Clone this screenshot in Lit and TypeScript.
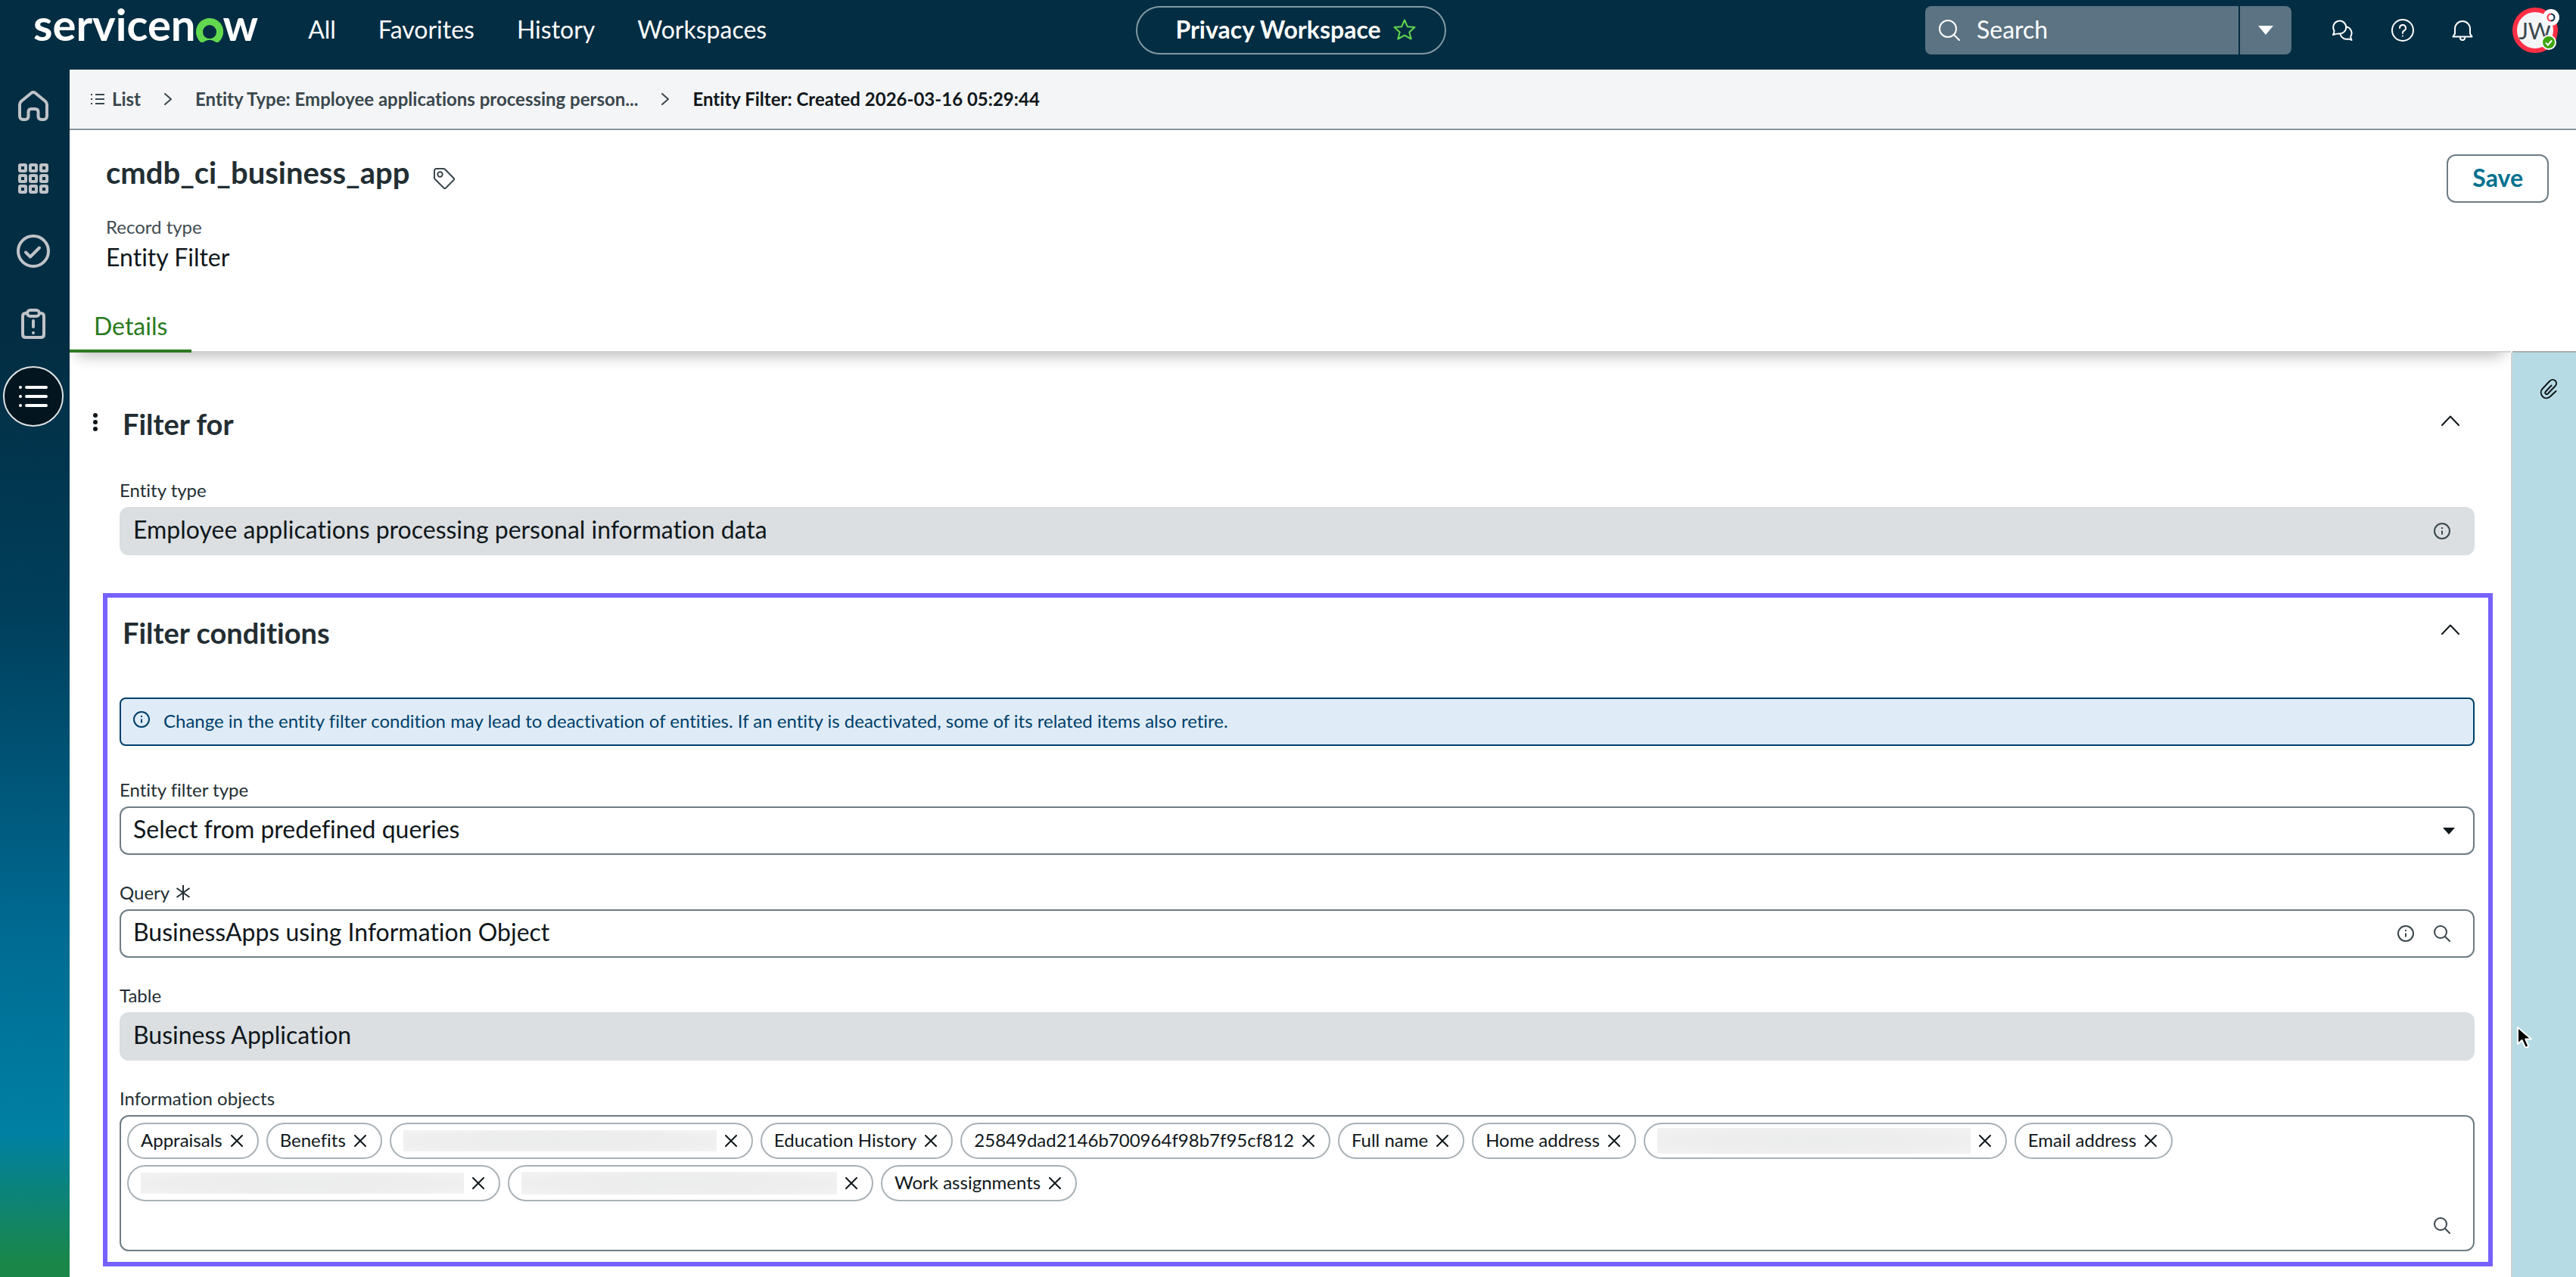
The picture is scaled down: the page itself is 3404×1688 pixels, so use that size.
import { LitElement, html, css, svg, nothing, type TemplateResult } from "lit";
import { customElement } from "lit/decorators.js";

type Tag = { label: string; width?: number; height?: number };

const NAV = ["All", "Favorites", "History", "Workspaces"];

/* Tags with a width have their label masked by a grey block. */
const TAGS: Tag[] = [
  { label: "Appraisals" },
  { label: "Benefits" },
  { label: "", width: 414, height: 28 },
  { label: "Education History" },
  { label: "25849dad2146b700964f98b7f95cf812" },
  { label: "Full name" },
  { label: "Home address" },
  { label: "", width: 414, height: 34 },
  { label: "Email address" },
  { label: "", width: 427, height: 28 },
  { label: "", width: 417, height: 30 },
  { label: "Work assignments" },
];

const icon = (w: number, h: number, body: TemplateResult | unknown, cls = "") =>
  html`<svg class=${cls} width=${w} height=${h} viewBox="0 0 ${w} ${h}" fill="none" stroke="currentColor" stroke-width="2" stroke-linecap="round" stroke-linejoin="round" aria-hidden="true">${body}</svg>`;

const infoIcon = () =>
  icon(22, 22, svg`<circle cx="11" cy="11" r="10"/><path d="M11 10.500v5" stroke-linecap="butt"/><path d="M11 6v2" stroke-linecap="butt"/>`);
const searchIcon = () => icon(22, 22, svg`<circle cx="9" cy="9" r="8"/><path d="M15 15l6 6"/>`);
const chevronUp = () => icon(24, 14, svg`<path d="M1 13L12 1.500L23 13"/>`);
const chevronRight = () => icon(10, 16, svg`<path d="M1 1l8 7-8 7"/>`);
const closeIcon = () => icon(16, 16, svg`<path d="M1 1l14 14M15 1L1 15"/>`);

const SIDE = [
  {
    name: "Home",
    body: icon(40, 40, svg`<path stroke-width="4" d="M2 18.500c0-2 .8-3.500 2.200-4.800L17 3.200c1.800-1.500 4.200-1.500 6 0l12.800 10.500c1.400 1.300 2.200 2.800 2.200 4.800V33c0 3-1.700 5-4.500 5h-2.700c-2.800 0-4.300-1.700-4.300-4.500V28c0-2.500-1.500-4-4-4h-5c-2.500 0-4 1.500-4 4v5.500c0 2.800-1.500 4.500-4.300 4.500H6.500C3.700 38 2 36 2 33z"/>`),
  },
  {
    name: "Apps",
    body: icon(40, 40, [0, 14, 28].map((y) => [0, 14, 28].map((x) => svg`<rect x=${x + 2} y=${y + 2} width="8" height="8" rx="1" stroke-width="4"/>`))),
  },
  {
    name: "Tasks",
    body: icon(44, 44, svg`<circle cx="22" cy="22" r="20" stroke-width="4"/><path stroke-width="4" d="M12 23.500l6 6 12-12"/>`),
  },
  {
    name: "Issues",
    body: icon(32, 40, svg`<path stroke-width="4" d="M8 6H6C3.500 6 2 7.500 2 10v24c0 2.500 1.500 4 4 4h20c2.500 0 4-1.500 4-4V10c0-2.500-1.500-4-4-4h-2"/><rect x="8" y="2" width="16" height="8" rx="4" stroke-width="4"/><path stroke-width="4" d="M16 16v8"/><path stroke-width="4" d="M16 32v.1"/>`),
  },
  {
    name: "Lists",
    active: true,
    body: icon(38, 30, svg`<path stroke-width="4" d="M2 3v.1M2 15v.1M2 27v.1M10 3h26M10 15h26M10 27h26"/>`),
  },
];

@customElement("app-root")
export class AppRoot extends LitElement {
  static styles = css`
    :host {
      display: flex;
      flex-direction: column;
      min-height: 100vh;
      font-family: Lato, "Liberation Sans", sans-serif;
      font-size: 32px;
      line-height: 40px;
      font-variant-ligatures: none;
      color: #10171b;
      background: #fff;
    }
    *, *::before, *::after { box-sizing: border-box; }
    svg { display: block; flex: none; }
    button, input, select { font: inherit; font-variant-ligatures: none; color: inherit; margin: 0; }
    button { background: none; border: 0; padding: 0; cursor: pointer; }
    a { color: inherit; text-decoration: none; }
    h1, h2, p { margin: 0; }

    .top {
      display: grid;
      grid-template-columns: 1fr auto 1fr;
      align-items: center;
      height: 92px;
      padding: 0 24px 12px 32px;
      background: #032d42;
      color: #fff;
    }
    .left { display: flex; align-items: center; gap: 66px; padding-left: 12px; }
    .logo {
      display: flex;
      align-items: center;
      font-size: 58px;
      line-height: 48px;
      font-weight: 700;
    }
    .logo span { padding-bottom: 16px; }
    .nav { display: flex; gap: 56px; padding-bottom: 2px; }
    .pill {
      display: flex;
      align-items: center;
      gap: 16px;
      height: 64px;
      padding: 0 38px 2px 50px;
      border: 2px solid #8299a5;
      border-radius: 32px;
      font-weight: 700;
    }
    .pill svg { color: #62d84e; }
    .right { display: flex; align-items: center; justify-content: flex-end; }
    .search { display: flex; gap: 2px; height: 64px; margin-right: 52px; }
    .search-box {
      display: flex;
      align-items: center;
      gap: 22px;
      width: 414px;
      padding-left: 18px;
      background: #5b7382;
      border-radius: 8px 0 0 8px;
    }
    .search-box input {
      flex: 1;
      min-width: 0;
      height: 64px;
      padding: 0 0 4px;
      border: 0;
      outline: 0;
      background: none;
    }
    .search-box input::placeholder { color: #fff; opacity: 1; }
    .search-more {
      display: flex;
      align-items: center;
      justify-content: center;
      width: 68px;
      background: #5b7382;
      border-radius: 0 8px 8px 0;
    }
    .tools { display: flex; align-items: center; gap: 50px; }
    .avatar {
      position: relative;
      display: flex;
      align-items: center;
      justify-content: center;
      width: 60px;
      height: 60px;
      margin-left: 2px;
      border: 6px solid #ff2f46;
      border-radius: 50%;
      background: #f4f5f7;
      color: #3a474d;
      font-size: 30px;
    }
    .presence { position: absolute; right: -4px; bottom: -2px; }
    .ping { position: absolute; right: -8px; top: -4px; }

    .body { display: flex; flex: 1; }
    .side {
      display: flex;
      flex-direction: column;
      gap: 16px;
      width: 92px;
      padding: 8px 8px 8px 4px;
      background: linear-gradient(#032d42 0%, #032d42 22%, #003f5c 45%, #006b93 72%, #0080a3 88%, #1a8748 99%);
      color: #bfc3c8;
    }
    .side button {
      display: flex;
      align-items: center;
      justify-content: center;
      height: 80px;
      border-radius: 50%;
    }
    .side .active { border: 2px solid #dfe3e6; background: #03161f; color: #fff; }

    .page { display: flex; flex-direction: column; flex: 1; min-width: 0; }
    .crumbs {
      display: flex;
      align-items: center;
      height: 80px;
      padding: 0 28px;
      gap: 31px;
      border-bottom: 2px solid #86939a;
      background: #f4f5f7;
      color: #3a474d;
      font-size: 24px;
      font-weight: 700;
      line-height: 32px;
    }
    .crumbs a { display: flex; align-items: center; gap: 10px; }
    .crumbs .current { color: #10171b; }

    .record {
      display: flex;
      justify-content: space-between;
      align-items: flex-start;
      padding: 32px 36px 42px 48px;
    }
    .title { display: flex; align-items: center; gap: 32px; }
    h1, h2 { font-size: 40px; line-height: 48px; font-weight: 700; color: #232e33; }
    h2 { font-size: 38px; }
    .title svg { margin-top: 16px; color: #3a474d; }
    .kind { margin-top: 32px; font-size: 24px; line-height: 32px; color: #3f4c52; }
    .kind-value { margin-top: 4px; }
    .save {
      height: 64px;
      padding: 0 32px 2px;
      border: 2px solid #6e7c84;
      border-radius: 12px;
      color: #00718f;
      font-weight: 700;
    }

    .tabs { display: flex; position: relative; }
    .tab-list {
      flex: 1;
      border-bottom: 2px solid #ced3d6;
      box-shadow: 0 14px 20px -10px rgba(0, 0, 0, 0.28);
      clip-path: inset(0 0 -40px 0);
    }
    .tab-end { width: 84px; margin-left: 2px; border-bottom: 2px solid #a8adb1; }
    .tab {
      display: block;
      height: 64px;
      margin-bottom: -2px;
      padding: 0 32px 2px;
      border-bottom: 4px solid #2c7a20;
      color: #2a7a1e;
    }

    .split { display: flex; flex: 1; }
    .form { flex: 1; min-width: 0; padding: 70px 24px 14px 44px; }
    .rail {
      display: flex;
      align-items: flex-start;
      position: relative;
      width: 86px;
      padding: 34px 24px 0 36px;
      border-left: 2px solid #ced3d6;
      background: #b7dbe4;
    }
    .cursor { position: absolute; left: 4px; top: 889px; }

    .section { padding: 0 24px 50px 22px; }
    .boxed { padding: 22px 18px 14px 16px; border: 6px solid #7661ff; }
    .head { display: flex; align-items: center; padding-right: 20px; margin-bottom: 48px; }
    .head h2 { flex: 1; padding-left: 4px; }
    .head .fold { padding-bottom: 8px; }
    .with-menu { margin-left: -44px; }
    .with-menu h2 { padding-left: 24px; }
    .menu { display: flex; justify-content: center; width: 24px; padding-bottom: 4px; }
    .boxed .head { margin-bottom: 62px; }

    .alert {
      display: flex;
      align-items: center;
      gap: 18px;
      height: 64px;
      margin-bottom: 42px;
      padding: 0 16px 2px;
      border: 2px solid #00406a;
      border-radius: 8px;
      background: #dfecf7;
      color: #00406a;
      font-size: 24px;
      line-height: 32px;
    }
    .alert svg { margin-bottom: 4px; }

    .field + .field { margin-top: 34px; }
    .label {
      display: flex;
      align-items: center;
      gap: 8px;
      margin-bottom: 6px;
      font-size: 24px;
      line-height: 32px;
      color: #232e33;
    }
    .control {
      display: flex;
      align-items: center;
      position: relative;
      height: 64px;
      padding-right: 30px;
      gap: 26px;
      border: 2px solid #6e7c84;
      border-radius: 12px;
      color: #3a474d;
    }
    .control input, .control select {
      flex: 1;
      align-self: stretch;
      min-width: 0;
      padding: 0 0 4px 16px;
      border: 0;
      outline: 0;
      background: none;
      color: #10171b;
      appearance: none;
      opacity: 1;
    }
    .control.locked { border-color: #dbdfe2; background: #dbdfe2; }
    .control.choice { padding-right: 0; }
    .control.choice select { padding-right: 48px; }
    .caret { position: absolute; right: 24px; top: 26px; pointer-events: none; }

    .tags {
      display: grid;
      grid-template-columns: 1fr;
      gap: 8px;
      padding: 8px;
      border: 2px solid #6e7c84;
      border-radius: 12px;
    }
    .tag-list { display: flex; flex-wrap: wrap; gap: 8px 10px; margin: 0; padding: 0; list-style: none; }
    .tag {
      display: flex;
      align-items: center;
      gap: 11px;
      height: 48px;
      padding: 0 19px 0 16px;
      border: 2px solid #a9b1b6;
      border-radius: 24px;
      font-size: 24px;
      line-height: 32px;
    }
    .tag span { padding-bottom: 2px; }
    .mask { background: radial-gradient(ellipse at center, #ebecec 0%, #eeeeee 60%, #f3f3f3 100%); }
    .lookup {
      display: flex;
      align-items: center;
      gap: 8px;
      height: 48px;
      padding-right: 22px;
      color: #3a474d;
    }
    .lookup input { flex: 1; height: 48px; border: 0; outline: 0; padding: 0 8px; background: none; }
  `;

  private tag(t: Tag) {
    return html`<li class="tag">
      ${t.width
        ? html`<span class="mask" style="width:${t.width}px;height:${t.height}px"></span>`
        : html`<span>${t.label}</span>`}
      <button aria-label="Remove ${t.label || "item"}">${closeIcon()}</button>
    </li>`;
  }

  private head(text: string, menu = false) {
    return html`<div class="head ${menu ? "with-menu" : ""}">
      ${menu
        ? html`<button class="menu" aria-label="More actions">
            ${icon(6, 24, svg`<g fill="currentColor" stroke="none"><circle cx="3" cy="3" r="3"/><circle cx="3" cy="12" r="3"/><circle cx="3" cy="21" r="3"/></g>`)}
          </button>`
        : nothing}
      <h2>${text}</h2>
      <button class="fold" aria-label="Collapse ${text}">${chevronUp()}</button>
    </div>`;
  }

  render() {
    return html`
      <header class="top">
        <div class="left">
          <a class="logo" href="#" aria-label="servicenow">
            <span>servicen</span>
            <svg width="36" height="32" viewBox="0 0 18 16" aria-hidden="true">
              <path fill="#62d84e" fill-rule="evenodd" d="M9 0C4 0 0 4 0 9c0 2.600 1.100 5 2.800 6.600.6.600 1.600.600 2.300.100a6.500 6.500 0 0 1 7.800 0c.7.500 1.600.500 2.300-.1A9 9 0 0 0 9 0m0 13.500A4.400 4.400 0 0 1 4.500 9a4.500 4.500 0 1 1 9 0A4.400 4.400 0 0 1 9 13.500"/>
            </svg>
            <span>w</span>
          </a>
          <nav class="nav">${NAV.map((n) => html`<a href="#">${n}</a>`)}</nav>
        </div>
        <button class="pill">
          Privacy Workspace
          ${icon(30, 28, svg`<path d="M15 1.500l3.800 8.700 9.700.8-7.200 6.500 2.400 9L15 21.700l-8.700 4.800 2.400-9L1.500 11l9.700-.8z"/>`)}
        </button>
        <div class="right">
          <div class="search">
            <label class="search-box">
              ${icon(28, 28, svg`<circle cx="12" cy="12" r="11"/><path d="M20 20l7 7"/>`)}
              <input type="text" placeholder="Search" aria-label="Search" />
            </label>
            <button class="search-more" aria-label="Search options">
              ${icon(20, 12, svg`<path d="M0 0h20L10 12z" fill="currentColor" stroke="none"/>`)}
            </button>
          </div>
          <div class="tools">
            <button aria-label="Conversations">
              ${icon(30, 28, svg`<path d="M4.500 14.500A8.500 8.500 0 1 1 11 18.500Q6.500 18.500 3 20q1.500-2.500 1.500-5.500z"/><path d="M20.500 9.500a8.300 8.300 0 0 1 5.800 12.500q-.3 2 1.200 5-2.500-1.500-5-1.500a8.500 8.500 0 0 1-9.800-5.500"/>`)}
            </button>
            <button aria-label="Help">
              ${icon(30, 30, svg`<circle cx="15" cy="15" r="14"/><path d="M11 12a4 4 0 1 1 5.800 3.500c-1.300.7-1.800 1.500-1.800 2.700v.8"/><path d="M15 22.500v.1"/>`)}
            </button>
            <button aria-label="Notifications">
              ${icon(28, 28, svg`<path d="M4 18.500V12a10 10 0 0 1 20 0v6.500l2.500 4h-25z"/><path d="M11 24a3 3 0 0 0 6 0"/>`)}
            </button>
            <button class="avatar" aria-label="User menu">
              <span>JW</span>
              <svg class="ping" width="22" height="22" viewBox="0 0 22 22" aria-hidden="true">
                <circle cx="11" cy="11" r="11" fill="#fff"/>
                <path d="M11 6.500a4.500 4.500 0 0 0 0 9" fill="none" stroke="#ff2f46" stroke-width="2"/>
                <path d="M11 6.500a4.500 4.500 0 0 1 0 9" fill="none" stroke="#032d42" stroke-width="2"/>
              </svg>
              <svg class="presence" width="20" height="20" viewBox="0 0 20 20" aria-hidden="true">
                <circle cx="10" cy="10" r="9" fill="#3ea50c" stroke="#fff" stroke-width="2"/>
                <path d="M6 10.500l3 3 5-6" fill="none" stroke="#fff" stroke-width="2"/>
              </svg>
            </button>
          </div>
        </div>
      </header>

      <div class="body">
        <nav class="side" aria-label="Workspace">
          ${SIDE.map((s) => html`<button class=${s.active ? "active" : ""} aria-label=${s.name}>${s.body}</button>`)}
        </nav>

        <main class="page">
          <nav class="crumbs" aria-label="Breadcrumb">
            <a href="#">
              ${icon(18, 16, svg`<path stroke-linecap="butt" d="M6 2h12M6 8h12M6 14h12M0 2h2M0 8h2M0 14h2"/>`)}
              List
            </a>
            ${chevronRight()}
            <a href="#">Entity Type: Employee applications processing person...</a>
            ${chevronRight()}
            <span class="current">Entity Filter: Created 2026-03-16 05:29:44</span>
          </nav>

          <div class="record">
            <div>
              <div class="title">
                <h1>cmdb_ci_business_app</h1>
                ${icon(28, 28, svg`<path d="M1 3.500A2.500 2.500 0 0 1 3.500 1h9.700c.7 0 1.300.2 1.800.7L26.500 13.500a1.800 1.800 0 0 1 0 2.500L16 26.500a1.800 1.800 0 0 1-2.500 0L1.700 14.800A2.500 2.500 0 0 1 1 13z"/><circle cx="8.500" cy="8.500" r="3.200"/>`)}
              </div>
              <p class="kind">Record type</p>
              <p class="kind-value">Entity Filter</p>
            </div>
            <button class="save">Save</button>
          </div>

          <div class="tabs">
            <div class="tab-list" role="tablist">
              <button class="tab" role="tab" aria-selected="true">Details</button>
            </div>
            <div class="tab-end"></div>
          </div>

          <div class="split">
            <div class="form">
              <section class="section">
                ${this.head("Filter for", true)}
                <div class="field">
                  <label class="label" for="entity-type">Entity type</label>
                  <div class="control locked">
                    <input id="entity-type" type="text" readonly value="Employee applications processing personal information data" />
                    <button aria-label="Entity type details">${infoIcon()}</button>
                  </div>
                </div>
              </section>

              <section class="boxed">
                ${this.head("Filter conditions")}
                <div class="alert" role="status">
                  ${infoIcon()}
                  <span>Change in the entity filter condition may lead to deactivation of entities. If an entity is deactivated, some of its related items also retire.</span>
                </div>
                <div class="field">
                  <label class="label" for="filter-type">Entity filter type</label>
                  <div class="control choice">
                    <select id="filter-type"><option>Select from predefined queries</option></select>
                    ${icon(16, 9, svg`<path d="M0 0h16L8 9z" fill="#10171b" stroke="none"/>`, "caret")}
                  </div>
                </div>
                <div class="field">
                  <label class="label" for="query">
                    Query
                    ${icon(20, 20, svg`<path stroke-linecap="butt" d="M10 0v20M1.500 4l17 12M18.500 4l-17 12"/>`)}
                  </label>
                  <div class="control">
                    <input id="query" type="text" required value="BusinessApps using Information Object" />
                    <button aria-label="Query details">${infoIcon()}</button>
                    <button aria-label="Look up query">${searchIcon()}</button>
                  </div>
                </div>
                <div class="field">
                  <label class="label" for="table">Table</label>
                  <div class="control locked">
                    <input id="table" type="text" readonly value="Business Application" />
                  </div>
                </div>
                <div class="field">
                  <label class="label" for="objects">Information objects</label>
                  <div class="tags">
                    <ul class="tag-list">${TAGS.map((t) => this.tag(t))}</ul>
                    <div class="lookup">
                      <input id="objects" type="text" />
                      <button aria-label="Look up information objects">${searchIcon()}</button>
                    </div>
                  </div>
                </div>
              </section>
            </div>

            <aside class="rail">
              <button aria-label="Attachments">
                ${icon(24, 28, svg`<path d="M15.500 9.500L8 17.500c-2 2.300.8 5 3 2.800l9.500-10c4.500-5-2-11.500-7-6.800L3.800 13.700C-2 20.500 6 30.500 13.500 24.500l8-7.500"/>`)}
              </button>
              <svg class="cursor" width="28" height="38" viewBox="0 0 28 38" aria-hidden="true">
                <path d="M3 3v22l5.500-5 4 8.500c1.500 2 5 .5 4.300-2L13.300 18.500H21z" fill="#000" stroke="#fff" stroke-width="2" stroke-linejoin="round"/>
              </svg>
            </aside>
          </div>
        </main>
      </div>
    `;
  }
}
